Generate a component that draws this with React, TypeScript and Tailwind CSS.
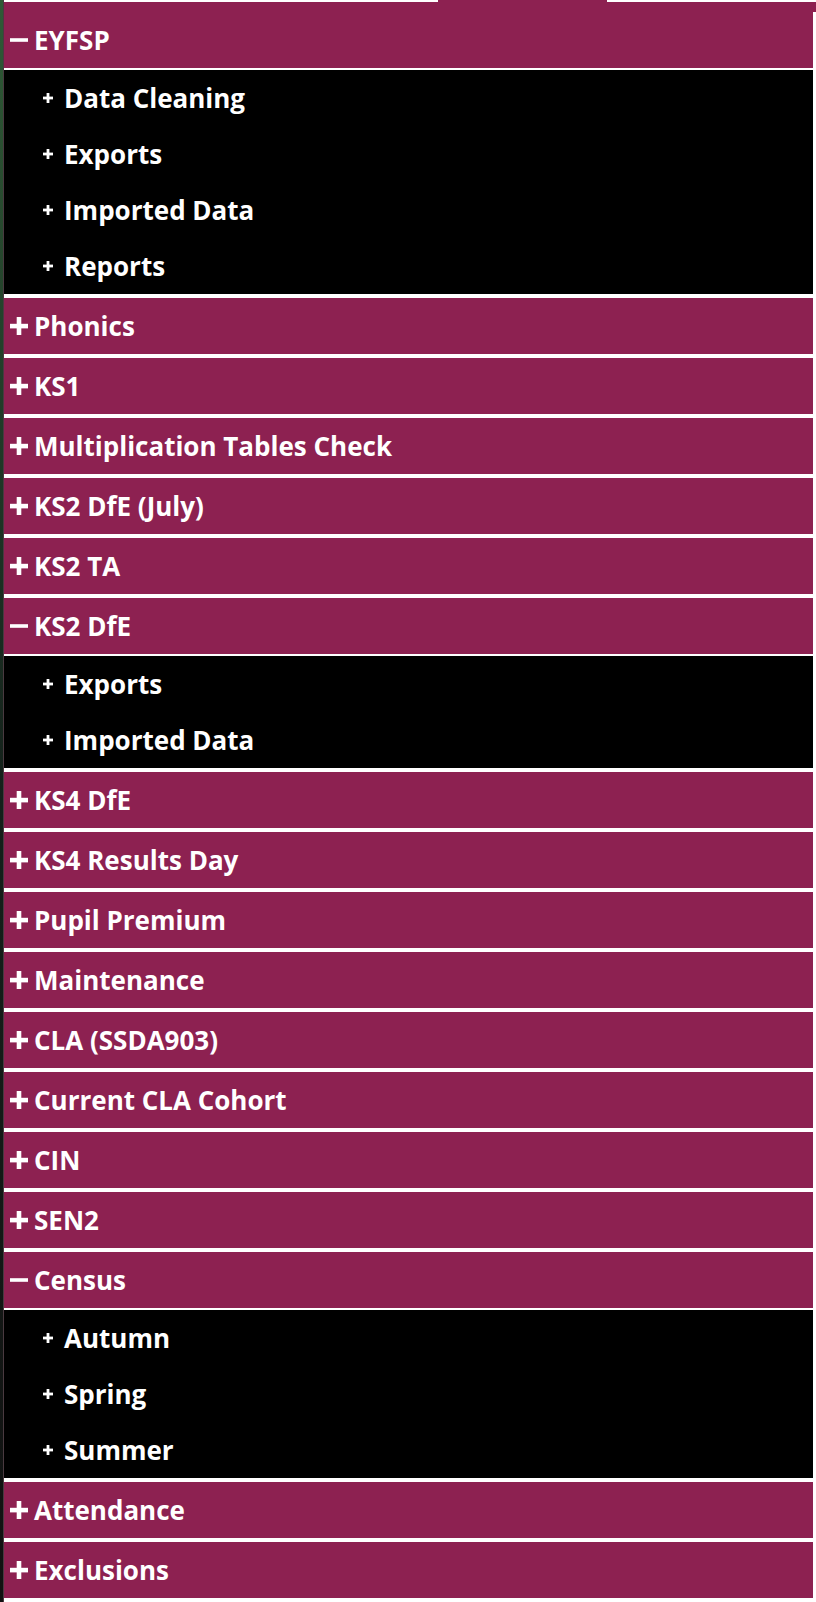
import React from "react";

type Section = { title: string; open?: boolean; items?: string[] };

const sections: Section[] = [
  { title: "EYFSP", open: true, items: ["Data Cleaning", "Exports", "Imported Data", "Reports"] },
  { title: "Phonics" },
  { title: "KS1" },
  { title: "Multiplication Tables Check" },
  { title: "KS2 DfE (July)" },
  { title: "KS2 TA" },
  { title: "KS2 DfE", open: true, items: ["Exports", "Imported Data"] },
  { title: "KS4 DfE" },
  { title: "KS4 Results Day" },
  { title: "Pupil Premium" },
  { title: "Maintenance" },
  { title: "CLA (SSDA903)" },
  { title: "Current CLA Cohort" },
  { title: "CIN" },
  { title: "SEN2" },
  { title: "Census", open: true, items: ["Autumn", "Spring", "Summer"] },
  { title: "Attendance" },
  { title: "Exclusions" },
];

function BigPlus() {
  return (
    <svg width="18" height="18" viewBox="0 0 18 18" className="shrink-0">
      <rect x="0" y="6.8" width="18" height="4.6" fill="#fff" />
      <rect x="6.7" y="0" width="4.6" height="18" fill="#fff" />
    </svg>
  );
}

function BigMinus() {
  return (
    <svg width="18" height="18" viewBox="0 0 18 18" className="shrink-0">
      <rect x="0" y="7.2" width="18" height="3.6" fill="#fff" />
    </svg>
  );
}

function SmallPlus() {
  return (
    <svg width="10" height="10" viewBox="0 0 10 10" className="shrink-0">
      <rect x="0" y="3.6" width="10" height="2.8" fill="#fff" />
      <rect x="3.6" y="0" width="2.8" height="10" fill="#fff" />
    </svg>
  );
}

export default function App() {
  return (
    <div
      className="flex w-[816px] bg-white text-white"
      style={{ fontFamily: '"Open Sans", "Noto Sans", sans-serif' }}
    >
      {/* window edge on the left */}
      <div className="flex w-[4px] shrink-0">
        <div className="w-[3px] bg-gradient-to-b from-[#2f5a36] via-[#14201a] to-[#111]" />
        <div className="w-[1px] bg-[#4a3a40]" />
      </div>

      <div className="flex flex-1 flex-col">
        {/* tab strip */}
        <div className="flex h-[2px]">
          <div className="w-[434px] bg-white" />
          <div className="w-[169px] bg-[#8d2151]" />
          <div className="flex-1 bg-white" />
        </div>
        <div className="h-[10px] bg-[#8d2151]" />

        <nav className="flex flex-col pr-[3px]">
          {sections.map((s) => (
            <div key={s.title} className="flex flex-col">
              <div className="flex h-[56px] items-center bg-[#8d2151] pl-[6px]">
                {s.open ? <BigMinus /> : <BigPlus />}
                <span className="ml-[6px] text-[26px] font-bold leading-none">{s.title}</span>
              </div>
              {s.open && s.items ? (
                <div className="mt-[2px] flex flex-col bg-black">
                  {s.items.map((it) => (
                    <div key={it} className="flex h-[56px] items-center pl-[39px]">
                      <SmallPlus />
                      <span className="ml-[11px] text-[26px] font-bold leading-none">{it}</span>
                    </div>
                  ))}
                </div>
              ) : null}
              <div className="h-[4px] bg-white" />
            </div>
          ))}
        </nav>
      </div>
    </div>
  );
}
